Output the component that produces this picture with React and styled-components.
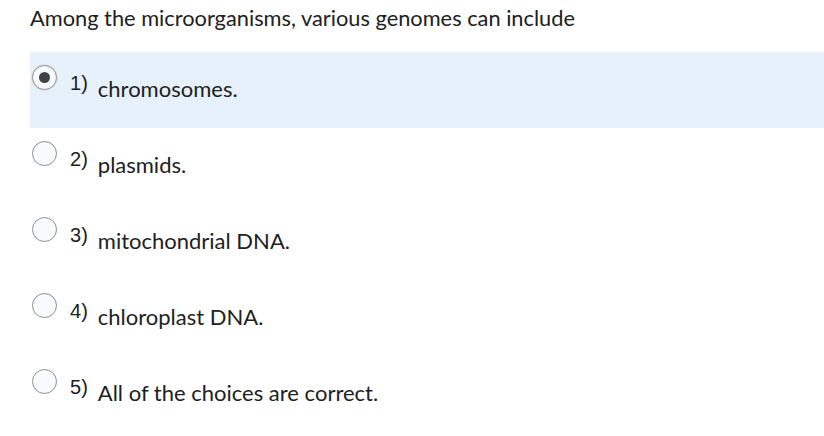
import React from "react"
import styled, { createGlobalStyle } from "styled-components"

const GlobalStyle = createGlobalStyle`
  body {
    margin: 0;
    background: #ffffff;
    font-family: Lato, "Noto Sans", sans-serif;
    color: #202122;
  }
`

const Page = styled.div`
  width: 824px;
  padding-top: 5px;
`

const Question = styled.div`
  font-size: 21.8px;
  line-height: 26px;
  padding-left: 30px;
  margin-bottom: 21px;
`

const Choices = styled.div`
  display: flex;
  flex-direction: column;
  margin-left: 30px;
`

const Choice = styled.label`
  display: flex;
  align-items: flex-start;
  height: 76px;
  box-sizing: border-box;
  padding-top: 13px;
  padding-left: 2px;
  background: ${(p) => (p.$selected ? "#e7f1fb" : "transparent")};
`

const Radio = styled.span`
  width: 23px;
  height: 23px;
  border-radius: 50%;
  border: 1px solid #8b8f92;
  background: #f9fafe;
  display: flex;
  align-items: center;
  justify-content: center;
  flex-shrink: 0;
  box-shadow: ${(p) => (p.$checked ? "0 0 0 1px #dfe3e6" : "none")};

  &::after {
    content: "";
    display: ${(p) => (p.$checked ? "block" : "none")};
    width: 11px;
    height: 11px;
    border-radius: 50%;
    background: #404345;
  }
`

const Number = styled.span`
  font-family: "Liberation Sans", Arial, sans-serif;
  font-size: 20px;
  line-height: 22px;
  margin-left: 13px;
  margin-top: 7px;
  color: #202122;
`

const Text = styled.span`
  font-size: 22px;
  line-height: 26px;
  margin-left: 10px;
  margin-top: 11px;
`

const choices = [
  "chromosomes.",
  "plasmids.",
  "mitochondrial DNA.",
  "chloroplast DNA.",
  "All of the choices are correct.",
]

const App = () => (
  <Page>
    <GlobalStyle />
    <Question>Among the microorganisms, various genomes can include</Question>
    <Choices>
      {choices.map((c, i) => (
        <Choice key={i} $selected={i === 0}>
          <Radio $checked={i === 0} />
          <Number>{i + 1})</Number>
          <Text>{c}</Text>
        </Choice>
      ))}
    </Choices>
  </Page>
)

export default App
